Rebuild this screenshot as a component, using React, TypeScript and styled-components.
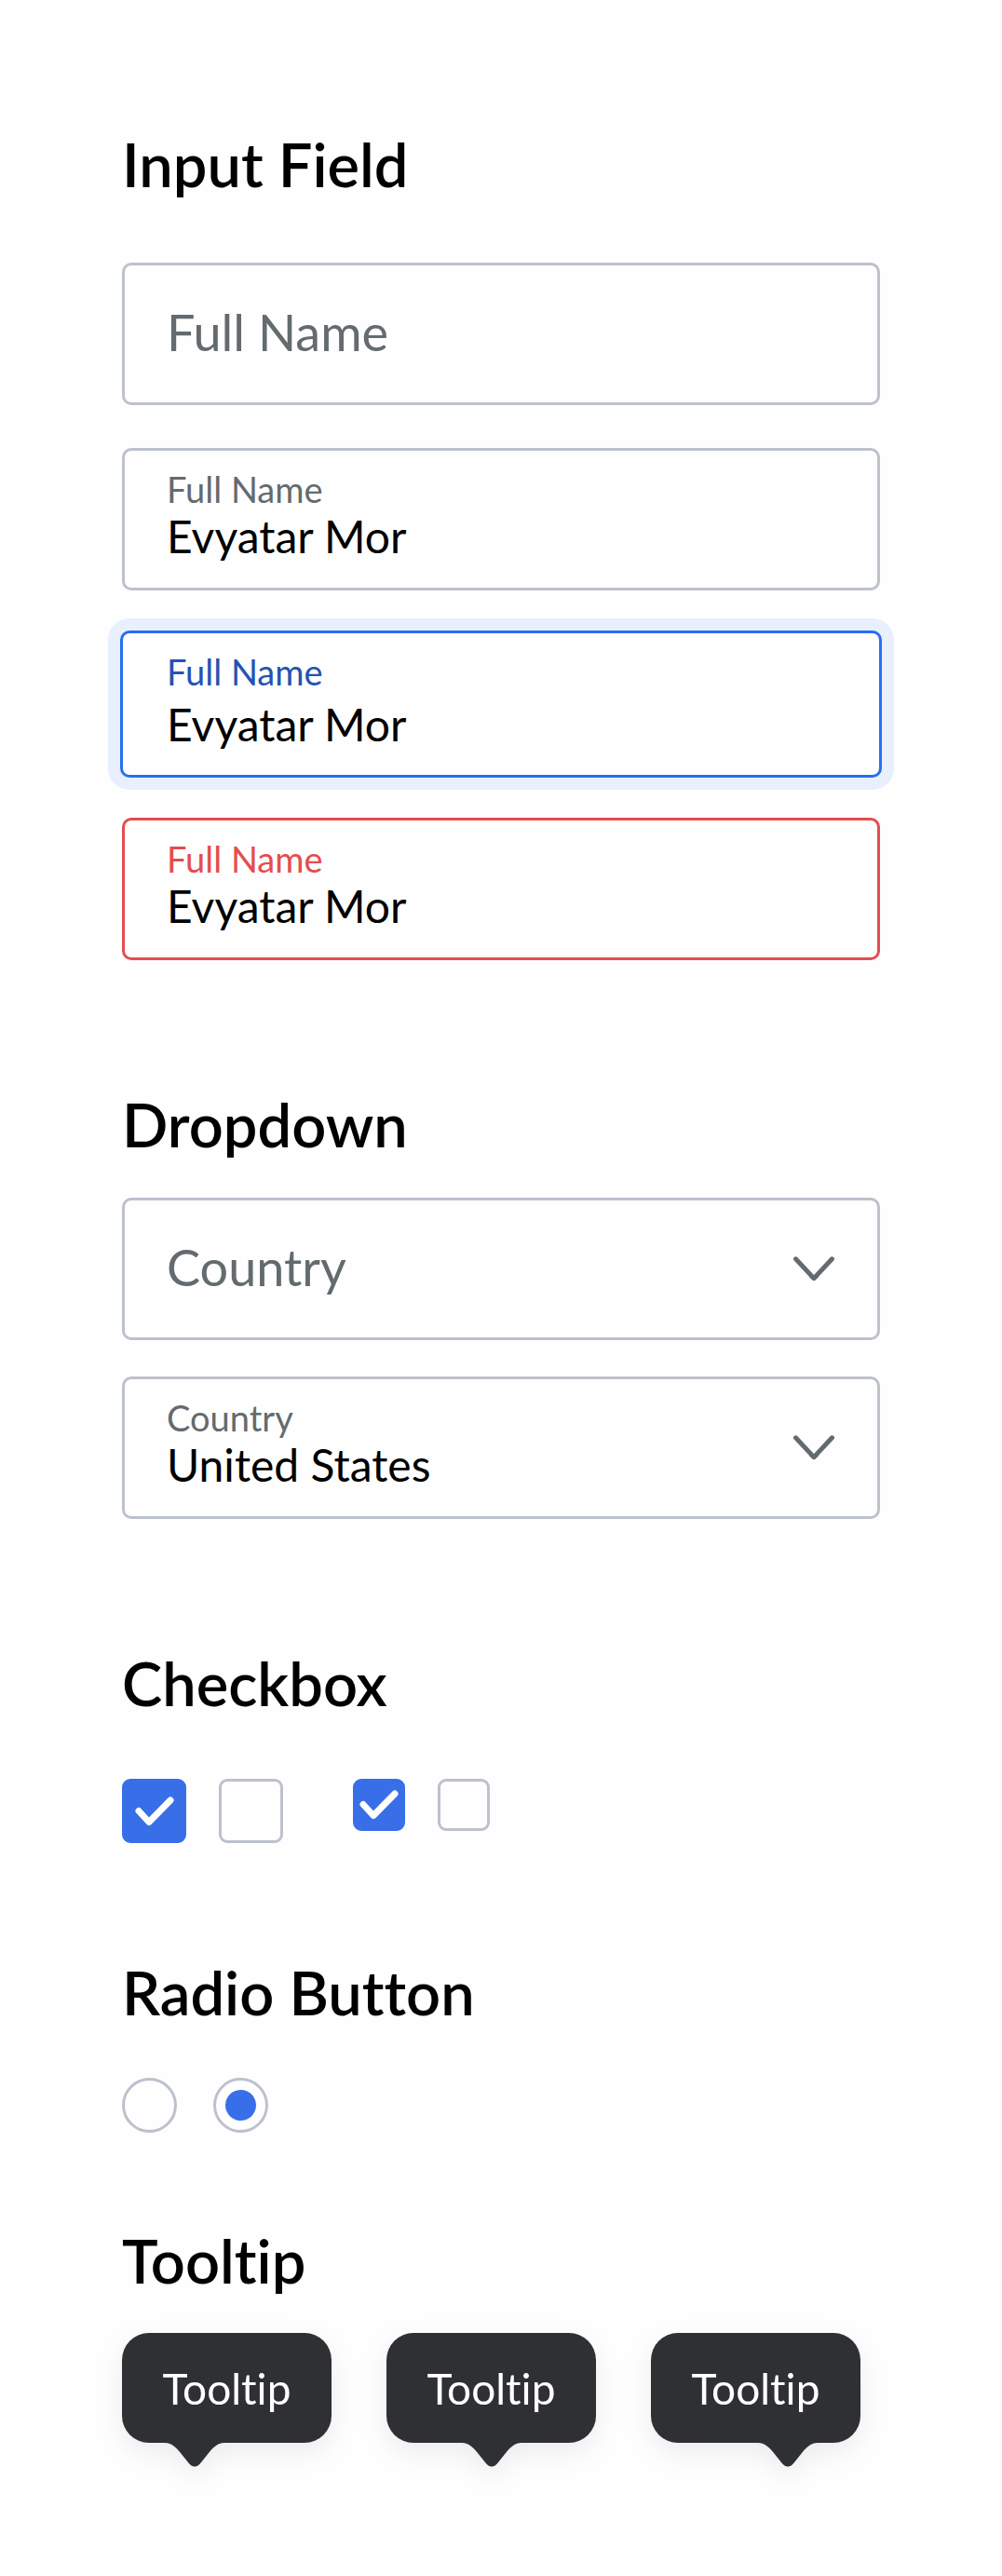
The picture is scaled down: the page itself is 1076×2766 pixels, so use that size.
import React, { useId } from "react";
import styled, { createGlobalStyle, css } from "styled-components";

const color = {
  page: "#fefefe",
  ink: "#000000",
  muted: "#636b6e",
  line: "#bcc1cc",
  accent: "#386fe9",
  focus: "#276ef1",
  focusLabel: "#2453b3",
  focusRing: "#e8f0fe",
  error: "#e54d4d",
  tooltip: "#2f3034",
};

type Status = "default" | "focused" | "error";

const GlobalStyle = createGlobalStyle`
  *, *::before, *::after { box-sizing: border-box; }
  body {
    margin: 0;
    background: ${color.page};
    color: ${color.ink};
    font-family: Lato, "Open Sans", sans-serif;
    font-variant-ligatures: none;
  }
  input, select { font: inherit; color: inherit; margin: 0; }
`;

const Page = styled.main`
  padding: 140px 131px 117px;
`;

const Section = styled.section<{ $space?: number }>`
  display: flex;
  flex-direction: column;
  margin-top: ${({ $space = 0 }) => $space}px;
`;

const Heading = styled.h2<{ $gap: number }>`
  margin: 0 0 ${({ $gap }) => $gap}px;
  font-size: 65px;
  font-weight: 600;
  line-height: 72px;
`;

const Stack = styled.div<{ $gap: number }>`
  display: flex;
  flex-direction: column;
  gap: ${({ $gap }) => $gap}px;
`;

const Row = styled.div<{ $gap: number }>`
  display: flex;
  align-items: flex-start;
  gap: ${({ $gap }) => $gap}px;
`;

const borderColor = { default: color.line, focused: color.focus, error: color.error };
const labelColor = { default: color.muted, focused: color.focusLabel, error: color.error };

const FieldBox = styled.div<{ $status: Status }>`
  display: flex;
  align-items: center;
  gap: 24px;
  min-height: 153px;
  padding: 0 46px 0 45px;
  border: 3px solid ${({ $status }) => borderColor[$status]};
  border-radius: 10px;
  background: ${color.page};
  ${({ $status }) =>
    $status === "focused" &&
    css`
      min-height: 158px;
      margin: -3px -2px;
      padding: 0 48px 0 47px;
      box-shadow: 0 0 0 13px ${color.focusRing};
    `}
`;

const FieldBody = styled.div<{ $status: Status }>`
  display: flex;
  flex: 1;
  flex-direction: column;
  gap: ${({ $status }) => ($status === "focused" ? 6 : 0)}px;
  min-width: 0;
  padding-bottom: 6px;
`;

const Label = styled.label<{ $status: Status }>`
  color: ${({ $status }) => labelColor[$status]};
  font-size: 38px;
  line-height: 43px;
`;

const bareControl = css`
  appearance: none;
  width: 100%;
  min-width: 0;
  padding: 0;
  border: 0;
  border-radius: 0;
  outline: 0;
  background: transparent;
`;

const valueText = css`
  height: 58px;
  font-size: 48px;
  line-height: 58px;
`;

const promptText = css`
  flex: 1;
  height: 72px;
  margin-bottom: 4px;
  color: ${color.muted};
  font-size: 54px;
  line-height: 72px;
`;

const ValueInput = styled.input`
  ${bareControl}
  ${valueText}
`;

const PromptInput = styled.input`
  ${bareControl}
  ${promptText}
  &::placeholder {
    color: ${color.muted};
    opacity: 1;
  }
`;

const ValueSelect = styled.select`
  ${bareControl}
  ${valueText}
`;

const PromptSelect = styled.select`
  ${bareControl}
  ${promptText}
`;

const ChevronIcon = styled.svg`
  flex: none;
  width: 44px;
  height: 28px;
  fill: none;
  stroke: ${color.muted};
  stroke-width: 5;
  stroke-linecap: round;
  stroke-linejoin: round;
`;

const Chevron = () => (
  <ChevronIcon viewBox="0 0 44 28" aria-hidden="true">
    <path d="M2.5 2.8 22 23.6 41.5 2.8" />
    <path d="M18.5 21.5H25.5L22 24.5Z" strokeWidth="3" fill={color.muted} />
  </ChevronIcon>
);

const Tick = styled.label<{ $size: number }>`
  display: grid;
  flex: none;
  width: ${({ $size }) => $size}px;
  height: ${({ $size }) => $size}px;
  > * {
    grid-area: 1 / 1;
  }
`;

const TickInput = styled.input`
  appearance: none;
  width: 100%;
  height: 100%;
  border: 3px solid ${color.line};
  border-radius: 9px;
  background: ${color.page};
  &:checked {
    border-color: ${color.accent};
    background: ${color.accent};
  }
`;

const TickMark = styled.svg`
  place-self: center;
  width: 42px;
  height: 32px;
  fill: none;
  stroke: #ffffff;
  stroke-width: 7;
  stroke-linecap: round;
  stroke-linejoin: round;
  pointer-events: none;
  visibility: hidden;
  input:checked + & {
    visibility: visible;
  }
`;

const RadioInput = styled.input`
  appearance: none;
  display: grid;
  place-items: center;
  width: 59px;
  height: 59px;
  border: 3px solid ${color.line};
  border-radius: 50%;
  &:checked::before {
    content: "";
    width: 33px;
    height: 33px;
    border-radius: 50%;
    background: ${color.accent};
  }
`;

const Bubble = styled.div`
  display: flex;
  flex-direction: column;
  width: 225px;
  filter: drop-shadow(0 10px 14px rgba(0, 0, 0, 0.07));
`;

const BubbleText = styled.div`
  padding: 30px 0 28px;
  border-radius: 29px;
  background: ${color.tooltip};
  color: #ffffff;
  font-size: 46px;
  line-height: 60px;
  text-align: center;
`;

const BubbleTail = styled.svg<{ $side: "flex-start" | "center" | "flex-end" }>`
  align-self: ${({ $side }) => $side};
  width: 64px;
  height: 27px;
  margin: -1px 46px 0;
  fill: ${color.tooltip};
`;

function TextField({ label, value, status = "default" }: { label: string; value: string; status?: Status }) {
  const id = useId();
  return (
    <FieldBox $status={status}>
      <FieldBody $status={status}>
        <Label htmlFor={id} $status={status}>
          {label}
        </Label>
        <ValueInput id={id} type="text" defaultValue={value} aria-invalid={status === "error"} />
      </FieldBody>
    </FieldBox>
  );
}

function Checkbox({ size, label, checked }: { size: number; label: string; checked?: boolean }) {
  return (
    <Tick $size={size}>
      <TickInput type="checkbox" aria-label={label} defaultChecked={checked} />
      <TickMark viewBox="0 0 42 32" aria-hidden="true">
        <path d="M4 15.5 15 27.5 38 4" />
      </TickMark>
    </Tick>
  );
}

function Tooltip({ side }: { side: "flex-start" | "center" | "flex-end" }) {
  return (
    <Bubble role="tooltip">
      <BubbleText>Tooltip</BubbleText>
      <BubbleTail $side={side} viewBox="0 0 64 27" aria-hidden="true">
        <path d="M0 0V1C8 1.500 12 6 17 12L25 22Q32 31 39 22L47 12C52 6 56 1.500 64 1V0Z" />
      </BubbleTail>
    </Bubble>
  );
}

export default function App() {
  const countryId = useId();
  return (
    <>
      <GlobalStyle />
      <Page>
        <Section>
          <Heading $gap={70}>Input Field</Heading>
          <Stack $gap={46}>
            <FieldBox $status="default">
              <PromptInput type="text" placeholder="Full Name" aria-label="Full Name" />
            </FieldBox>
            <TextField label="Full Name" value="Evyatar Mor" />
            <TextField label="Full Name" value="Evyatar Mor" status="focused" />
            <TextField label="Full Name" value="Evyatar Mor" status="error" />
          </Stack>
        </Section>

        <Section $space={140}>
          <Heading $gap={43}>Dropdown</Heading>
          <Stack $gap={39}>
            <FieldBox $status="default">
              <PromptSelect defaultValue="" aria-label="Country">
                <option value="">Country</option>
                <option value="us">United States</option>
              </PromptSelect>
              <Chevron />
            </FieldBox>
            <FieldBox $status="default">
              <FieldBody $status="default">
                <Label htmlFor={countryId} $status="default">
                  Country
                </Label>
                <ValueSelect id={countryId} defaultValue="us">
                  <option value="us">United States</option>
                </ValueSelect>
              </FieldBody>
              <Chevron />
            </FieldBox>
          </Stack>
        </Section>

        <Section $space={140}>
          <Heading $gap={67}>Checkbox</Heading>
          <Row $gap={75}>
            <Row $gap={35}>
              <Checkbox size={69} label="Large, on" checked />
              <Checkbox size={69} label="Large, off" />
            </Row>
            <Row $gap={35}>
              <Checkbox size={56} label="Small, on" checked />
              <Checkbox size={56} label="Small, off" />
            </Row>
          </Row>
        </Section>

        <Section $space={124}>
          <Heading $gap={56}>Radio Button</Heading>
          <Row $gap={39}>
            <RadioInput type="radio" name="choice" aria-label="First choice" />
            <RadioInput type="radio" name="choice" aria-label="Second choice" defaultChecked />
          </Row>
        </Section>

        <Section $space={101}>
          <Heading $gap={42}>Tooltip</Heading>
          <Row $gap={59}>
            <Tooltip side="flex-start" />
            <Tooltip side="center" />
            <Tooltip side="flex-end" />
          </Row>
        </Section>
      </Page>
    </>
  );
}
